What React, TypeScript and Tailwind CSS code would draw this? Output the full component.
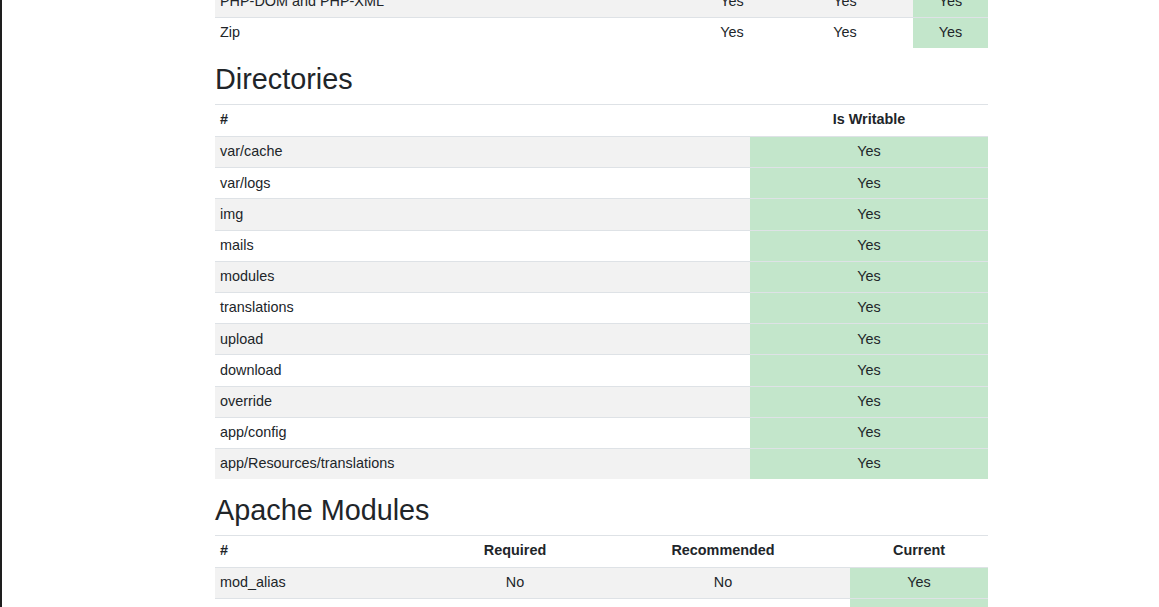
import React from "react";

const cellBase = "py-[4.3px] px-[5px] leading-[21.6px] align-middle";
const headBase = "pt-[4.2px] pb-[5.4px] px-[5px] leading-[21.6px] align-middle";
const rowBase = "border-t border-[#dee2e6]";

type Cell = { text: string; ok?: boolean; center?: boolean };

function DataTable({
  cols,
  header,
  rows,
  headerAlign,
  stripeStart = 0,
  showHeader = true,
}: {
  cols: string[];
  header?: string[];
  rows: Cell[][];
  headerAlign?: boolean[];
  stripeStart?: number;
  showHeader?: boolean;
}) {
  return (
    <table className="w-[773px] table-fixed border-collapse text-[14.4px] text-[#212529]">
      <colgroup>
        {cols.map((w, i) => (
          <col key={i} style={{ width: w }} />
        ))}
      </colgroup>
      <tbody>
        {showHeader && header && (
          <tr className={rowBase}>
            {header.map((h, i) => (
              <th
                key={i}
                className={`${headBase} font-bold ${
                  headerAlign && headerAlign[i] ? "text-center" : "text-left"
                }`}
              >
                {h}
              </th>
            ))}
          </tr>
        )}
        {rows.map((r, ri) => {
          const striped = (ri + stripeStart) % 2 === 0;
          return (
            <tr key={ri} className={`${rowBase} ${striped ? "bg-[#f2f2f2]" : "bg-white"}`}>
              {r.map((c, ci) => (
                <td
                  key={ci}
                  className={`${cellBase} ${c.center ? "text-center" : "text-left"} ${
                    c.ok ? "bg-[#c3e6cb]" : ""
                  }`}
                >
                  {c.text}
                </td>
              ))}
            </tr>
          );
        })}
      </tbody>
    </table>
  );
}

const dirs = [
  "var/cache",
  "var/logs",
  "img",
  "mails",
  "modules",
  "translations",
  "upload",
  "download",
  "override",
  "app/config",
  "app/Resources/translations",
];

export default function App() {
  return (
    <div
      className="min-h-screen border-l-2 border-[#1e1e1e] bg-white pl-[213px] overflow-hidden"
      style={{ fontFamily: '"Liberation Sans", Arial, sans-serif' }}
    >
      <div className="-mt-[14px]">
        <DataTable
          cols={["472px", "90px", "136px", "75px"]}
          showHeader={false}
          rows={[
            [
              { text: "PHP-DOM and PHP-XML" },
              { text: "Yes", center: true },
              { text: "Yes", center: true },
              { text: "Yes", center: true, ok: true },
            ],
            [
              { text: "Zip" },
              { text: "Yes", center: true },
              { text: "Yes", center: true },
              { text: "Yes", center: true, ok: true },
            ],
          ]}
        />
      </div>

      <h2 className="mt-[14px] mb-[7px] text-[28.8px] leading-[34.56px] font-normal text-[#212529]">
        Directories
      </h2>
      <DataTable
        cols={["535px", "238px"]}
        header={["#", "Is Writable"]}
        headerAlign={[false, true]}
        rows={dirs.map((d) => [{ text: d }, { text: "Yes", center: true, ok: true }])}
      />

      <h2 className="mt-[14px] mb-[7px] text-[28.8px] leading-[34.56px] font-normal text-[#212529]">
        Apache Modules
      </h2>
      <DataTable
        cols={["219px", "162px", "254px", "138px"]}
        header={["#", "Required", "Recommended", "Current"]}
        headerAlign={[false, true, true, true]}
        rows={[
          [
            { text: "mod_alias" },
            { text: "No", center: true },
            { text: "No", center: true },
            { text: "Yes", center: true, ok: true },
          ],
          [
            { text: "mod_auth_basic" },
            { text: "No", center: true },
            { text: "No", center: true },
            { text: "Yes", center: true, ok: true },
          ],
        ]}
      />
    </div>
  );
}
